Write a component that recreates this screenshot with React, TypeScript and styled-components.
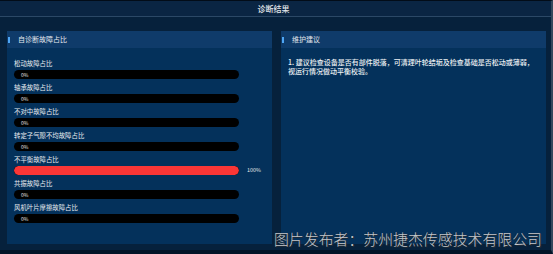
import React from "react";
import styled, { createGlobalStyle } from "styled-components";

const Global = createGlobalStyle`
  html, body { margin: 0; padding: 0; background: #061f38; }
  body { font-family: "Noto Sans CJK SC", "Noto Sans", sans-serif; }
  * { box-sizing: border-box; }
`;

const Frame = styled.div`
  position: relative;
  width: 553px;
  height: 254px;
  background: #06213c;
  border-top: 1px solid #020c18;
  border-right: 2px solid #33475c;
  border-bottom: 4px solid #031427;
  display: flex;
  flex-direction: column;
  overflow: hidden;
`;

const TopBar = styled.div`
  height: 16px;
  flex: none;
  background: #0a2543;
  border-bottom: 1px solid #2b4866;
  display: flex;
  align-items: center;
  justify-content: center;
  color: #e2e6ea;
  font-size: 8px;
  line-height: 10px;
  font-weight: 500;
  padding-right: 4px;
`;

const Content = styled.div`
  display: grid;
  grid-template-columns: 265px 265px;
  column-gap: 9px;
  padding: 14px 0 0 7px;
`;

const Panel = styled.div`
  height: 213px;
  background: #04315b;
  display: flex;
  flex-direction: column;
`;

const PanelHeader = styled.div`
  height: 17px;
  flex: none;
  background: #0f3b6a;
  display: flex;
  align-items: center;
  color: #e4e8ee;
  font-size: 7px;
  line-height: 9px;
  padding-left: 1px;
`;

const Accent = styled.span`
  width: 2px;
  height: 6px;
  background: #4ea6f5;
  margin-right: 8px;
`;

const ChartBody = styled.div`
  padding: 12px 0 0 7px;
  display: flex;
  flex-direction: column;
  gap: 5px;
`;

const Row = styled.div`
  display: flex;
  flex-direction: column;
  gap: 2px;
`;

const Label = styled.div`
  height: 8px;
  font-size: 6.4px;
  line-height: 8px;
  color: #e8ecf0;
  white-space: nowrap;
`;

const BarLine = styled.div`
  display: flex;
  align-items: center;
  gap: 8px;
`;

const Track = styled.div`
  position: relative;
  width: 225px;
  height: 9px;
  border-radius: 4.5px;
  background: #000;
  overflow: hidden;
`;

const Fill = styled.div<{ $full: boolean }>`
  height: 100%;
  border-radius: 4.5px;
  background: ${(p) => (p.$full ? "#fa3636" : "transparent")};
`;

const InnerPct = styled.span`
  position: absolute;
  left: 7px;
  top: 0;
  font-size: 5px;
  line-height: 9px;
  color: #e8e8e8;
`;

const OuterPct = styled.span`
  font-size: 5.4px;
  line-height: 9px;
  color: #e8e8e8;
`;

const AdviceBody = styled.div`
  padding: 10px 7px 0 7px;
  color: #eef1f4;
  font-size: 7px;
  line-height: 9px;
  font-weight: 500;
`;

const Watermark = styled.div`
  position: absolute;
  right: 9px;
  bottom: 2px;
  font-size: 14.9px;
  line-height: 18px;
  font-weight: 300;
  color: #c3c7cc;
  white-space: nowrap;
  text-shadow: 1px 1px 0 #202a34, -1px 0 0 #202a34;
`;

const items: { name: string; value: number }[] = [
  { name: "松动故障占比", value: 0 },
  { name: "轴承故障占比", value: 0 },
  { name: "不对中故障占比", value: 0 },
  { name: "转定子气隙不均故障占比", value: 0 },
  { name: "不平衡故障占比", value: 100 },
  { name: "共振故障占比", value: 0 },
  { name: "风机叶片摩擦故障占比", value: 0 },
];

export default function App() {
  return (
    <>
      <Global />
      <Frame>
        <TopBar>诊断结果</TopBar>
        <Content>
          <Panel>
            <PanelHeader>
              <Accent />
              自诊断故障占比
            </PanelHeader>
            <ChartBody>
              {items.map((it) => (
                <Row key={it.name}>
                  <Label>{it.name}</Label>
                  <BarLine>
                    <Track>
                      <Fill $full={it.value > 0} style={{ width: `${it.value}%` }} />
                      {it.value === 0 && <InnerPct>0%</InnerPct>}
                    </Track>
                    {it.value > 0 && <OuterPct>{it.value}%</OuterPct>}
                  </BarLine>
                </Row>
              ))}
            </ChartBody>
          </Panel>
          <Panel>
            <PanelHeader>
              <Accent />
              维护建议
            </PanelHeader>
            <AdviceBody>
              1. 建议检查设备是否有部件脱落，可清理叶轮结垢及检查基础是否松动或薄弱，视运行情况做动平衡校验。
            </AdviceBody>
          </Panel>
        </Content>
        <Watermark>图片发布者：苏州捷杰传感技术有限公司</Watermark>
      </Frame>
    </>
  );
}
